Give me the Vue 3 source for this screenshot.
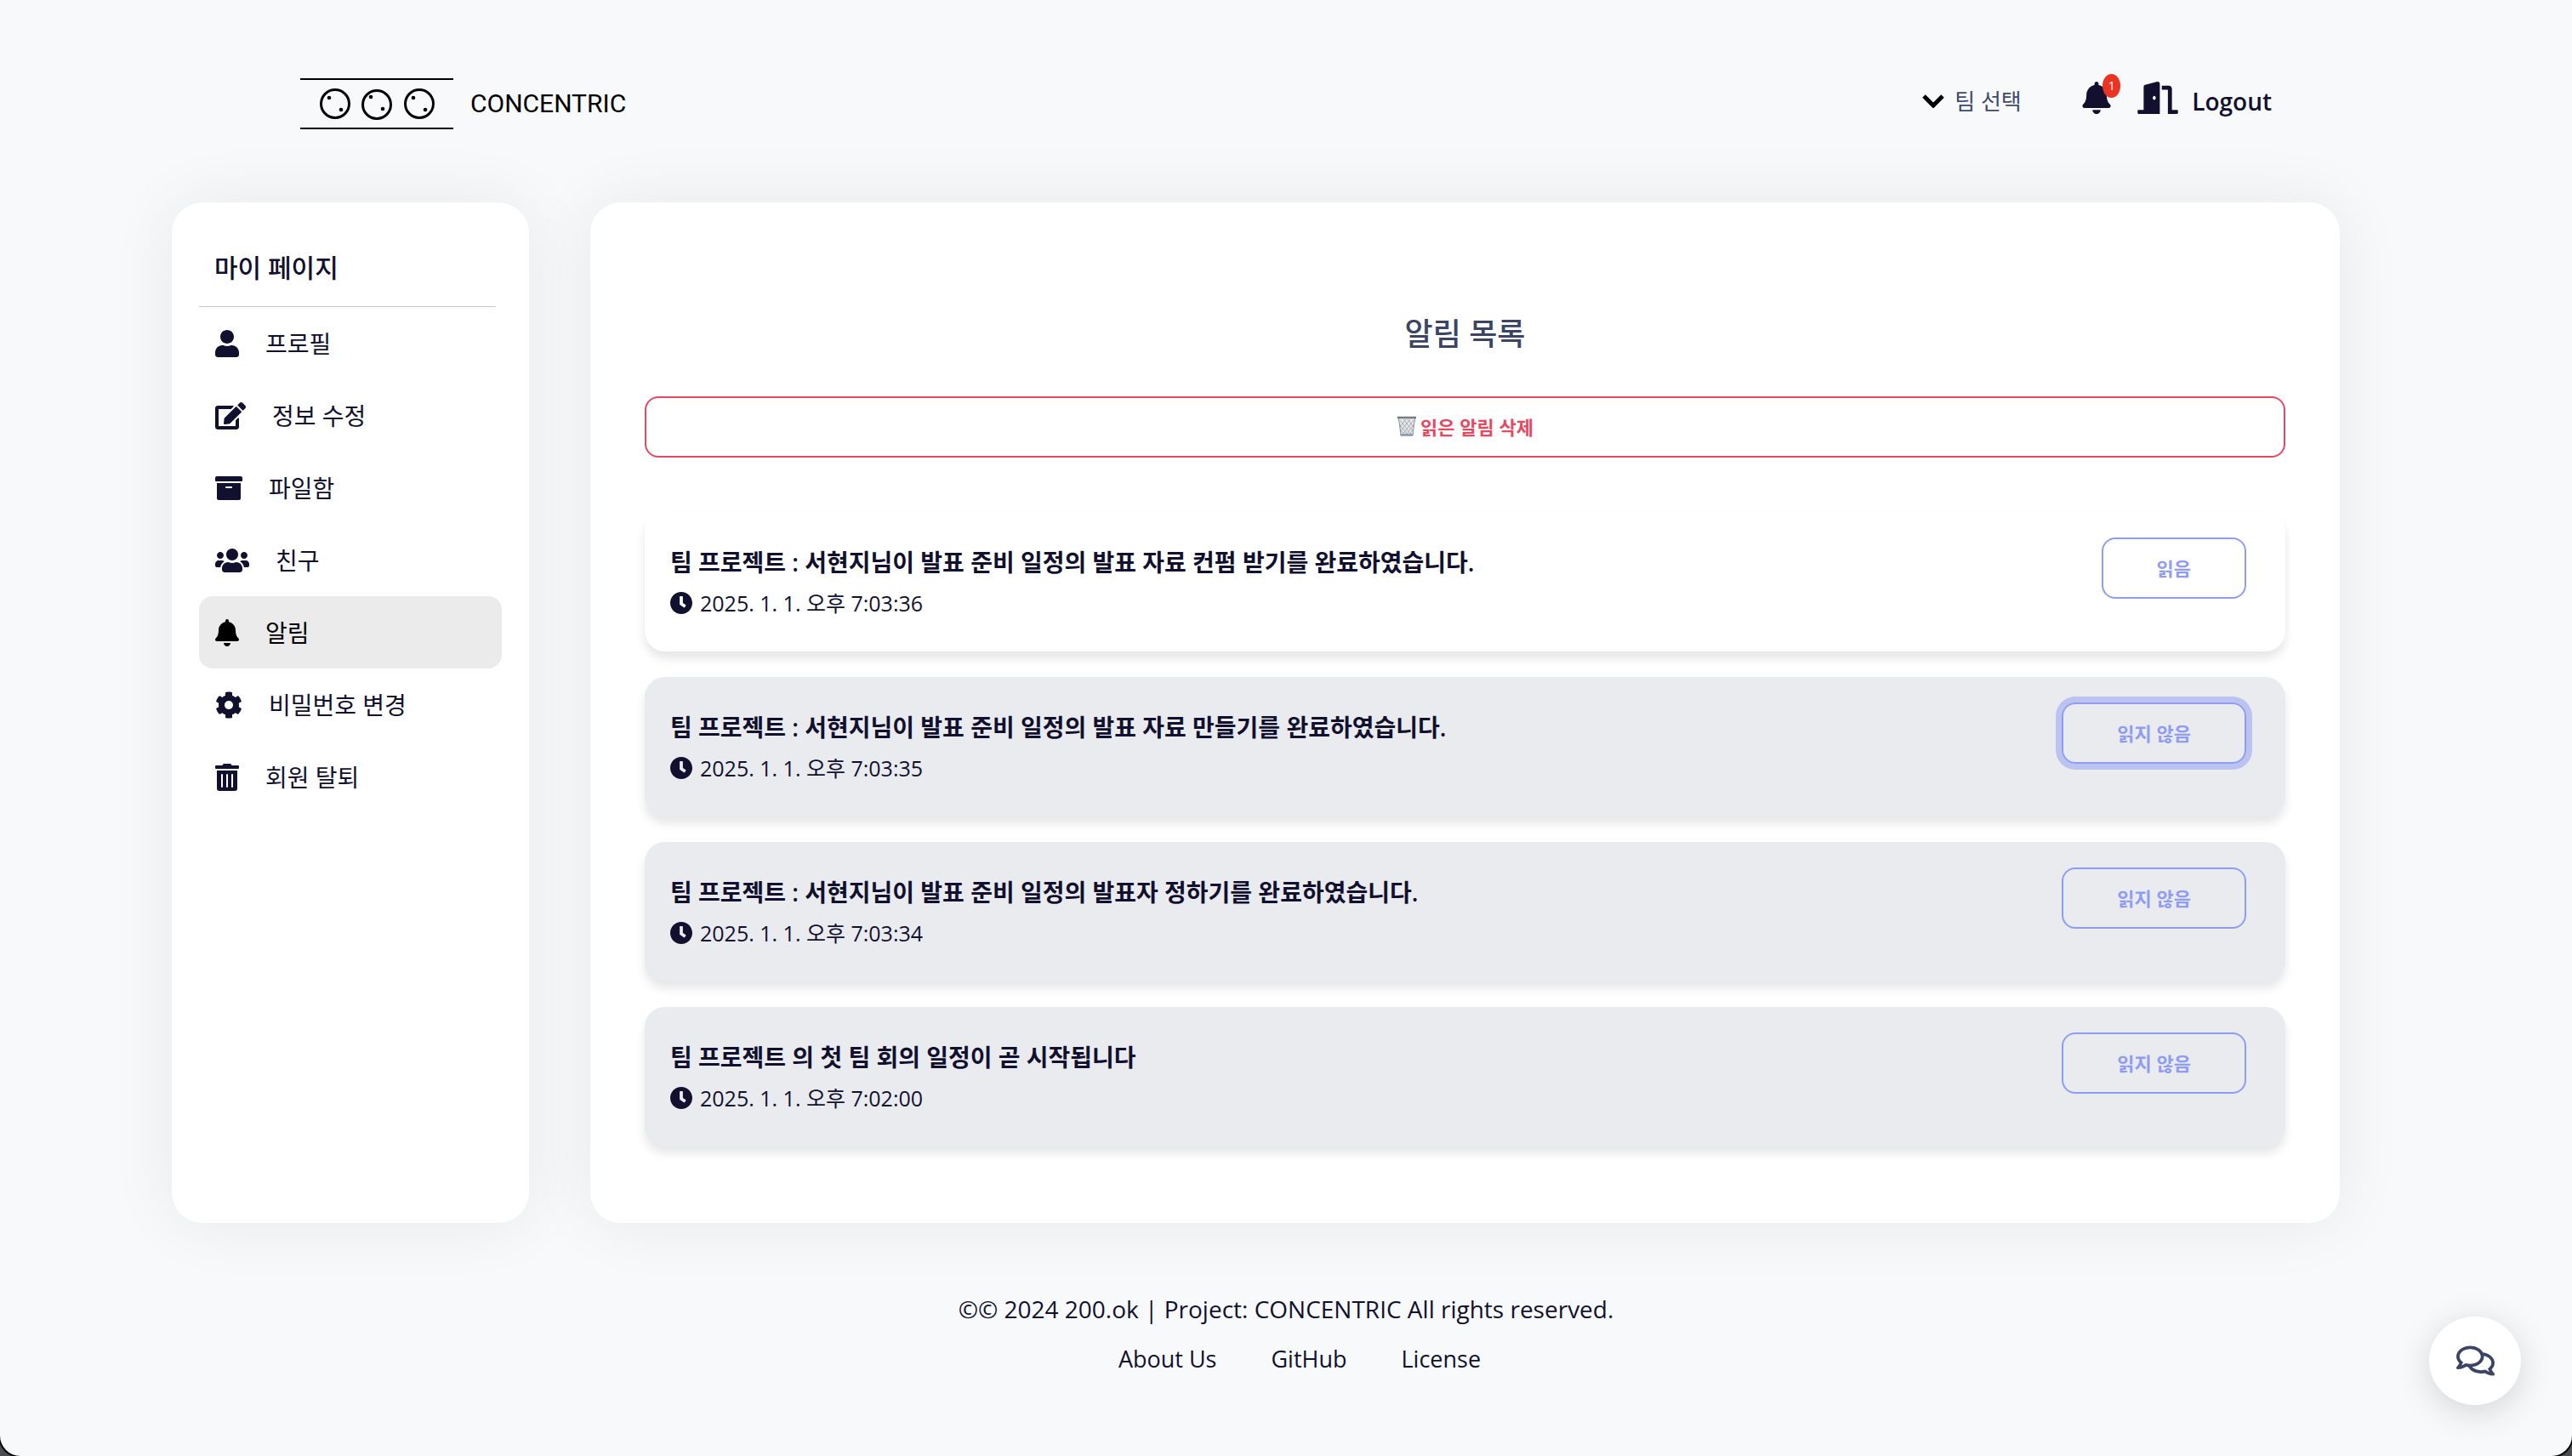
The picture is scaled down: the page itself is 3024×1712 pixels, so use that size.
<script setup>
import { ref } from 'vue'

const icons = {
  user: { w: 448, d: 'M224 256c70.7 0 128-57.3 128-128S294.7 0 224 0 96 57.3 96 128s57.3 128 128 128zm89.6 32h-16.7c-22.2 10.2-46.9 16-72.9 16s-50.6-5.8-72.9-16h-16.7C60.2 288 0 348.2 0 422.4V464c0 26.5 21.5 48 48 48h352c26.5 0 48-21.5 48-48v-41.6c0-74.2-60.2-134.4-134.4-134.4z' },
  edit: { w: 576, d: 'M402.6 83.2l90.2 90.2c3.8 3.8 3.8 10 0 13.8L274.4 405.6l-92.8 10.3c-12.4 1.4-22.9-9.1-21.5-21.5l10.3-92.8L388.8 83.2c3.8-3.8 10-3.8 13.8 0zm162-22.9l-48.8-48.8c-15.2-15.2-39.9-15.2-55.2 0l-35.4 35.4c-3.8 3.8-3.8 10 0 13.8l90.2 90.2c3.8 3.8 10 3.8 13.8 0l35.4-35.4c15.2-15.3 15.2-40 0-55.2zM384 346.2V448H64V128h229.8c3.2 0 6.2-1.3 8.5-3.5l40-40c7.6-7.6 2.2-20.5-8.5-20.5H48C21.5 64 0 85.5 0 112v352c0 26.5 21.5 48 48 48h352c26.5 0 48-21.5 48-48V306.2c0-10.7-12.9-16-20.5-8.5l-40 40c-2.2 2.3-3.5 5.3-3.5 8.5z' },
  archive: { w: 512, d: 'M32 448c0 17.7 14.3 32 32 32h384c17.7 0 32-14.3 32-32V160H32v288zm160-212c0-6.6 5.4-12 12-12h104c6.6 0 12 5.4 12 12v8c0 6.6-5.4 12-12 12H204c-6.6 0-12-5.4-12-12v-8zM480 32H32C14.3 32 0 46.3 0 64v48c0 8.800 7.200 16 16 16h480c8.800 0 16-7.200 16-16V64c0-17.700-14.300-32-32-32z' },
  users: { w: 640, d: 'M96 224c35.3 0 64-28.7 64-64s-28.7-64-64-64-64 28.7-64 64 28.7 64 64 64zm448 0c35.3 0 64-28.7 64-64s-28.7-64-64-64-64 28.7-64 64 28.7 64 64 64zm32 32h-64c-17.6 0-33.5 7.1-45.1 18.6 40.3 22.1 68.9 62 75.1 109.4h66c17.7 0 32-14.3 32-32v-32c0-35.3-28.7-64-64-64zm-256 0c61.9 0 112-50.1 112-112S381.9 32 320 32 208 82.1 208 144s50.1 112 112 112zm76.8 32h-8.3c-20.8 10-43.9 16-68.5 16s-47.6-6-68.5-16h-8.3C179.6 288 128 339.6 128 403.2V432c0 26.5 21.5 48 48 48h288c26.5 0 48-21.5 48-48v-28.8c0-63.6-51.6-115.2-115.2-115.2zm-223.7-13.4C161.5 263.1 145.6 256 128 256H64c-35.3 0-64 28.7-64 64v32c0 17.7 14.3 32 32 32h65.9c6.3-47.4 34.9-87.3 75.2-109.4z' },
  bell: { w: 448, d: 'M224 512c35.32 0 63.97-28.65 63.97-64H160.03c0 35.35 28.65 64 63.97 64zm215.39-149.71c-19.32-20.76-55.47-51.99-55.47-154.29 0-77.7-54.48-139.9-127.94-155.16V32c0-17.67-14.32-32-31.98-32s-31.98 14.33-31.98 32v20.84C118.56 68.1 64.08 130.3 64.08 208c0 102.3-36.15 133.53-55.47 154.29-6 6.45-8.66 14.16-8.61 21.71.11 16.4 12.98 32 32.1 32h383.8c19.12 0 32-15.6 32.1-32 .05-7.55-2.61-15.27-8.61-21.71z' },
  cog: { w: 512, d: 'M487.4 315.7l-42.6-24.6c4.3-23.2 4.3-47 0-70.2l42.6-24.6c4.9-2.8 7.1-8.6 5.5-14-11.1-35.6-30-67.8-54.7-94.6-3.8-4.1-10-5.1-14.8-2.3L380.8 110c-17.9-15.4-38.5-27.3-60.8-35.1V25.8c0-5.6-3.9-10.5-9.4-11.7-36.7-8.2-74.3-7.8-109.2 0-5.5 1.2-9.4 6.1-9.4 11.7V75c-22.2 7.9-42.8 19.8-60.8 35.1L88.7 85.5c-4.9-2.8-11-1.9-14.8 2.3-24.7 26.7-43.6 58.9-54.7 94.6-1.7 5.4.6 11.2 5.5 14L67.3 221c-4.3 23.2-4.3 47 0 70.2l-42.6 24.6c-4.9 2.8-7.1 8.6-5.5 14 11.1 35.6 30 67.8 54.7 94.6 3.8 4.1 10 5.1 14.8 2.3l42.6-24.6c17.9 15.4 38.5 27.3 60.8 35.1v49.2c0 5.6 3.9 10.5 9.4 11.7 36.7 8.2 74.3 7.8 109.2 0 5.5-1.2 9.4-6.1 9.4-11.7v-49.2c22.2-7.9 42.8-19.8 60.8-35.1l42.6 24.6c4.9 2.8 11 1.9 14.8-2.3 24.7-26.7 43.6-58.9 54.7-94.6 1.5-5.5-.7-11.3-5.6-14.1zM256 336c-44.1 0-80-35.9-80-80s35.9-80 80-80 80 35.9 80 80-35.9 80-80 80z' },
  trash: { w: 448, d: 'M32 464a48 48 0 0 0 48 48h288a48 48 0 0 0 48-48V128H32zm272-256a16 16 0 0 1 32 0v224a16 16 0 0 1-32 0zm-96 0a16 16 0 0 1 32 0v224a16 16 0 0 1-32 0zm-96 0a16 16 0 0 1 32 0v224a16 16 0 0 1-32 0zM432 32H312l-9.4-18.7A24 24 0 0 0 281.1 0H166.8a23.72 23.72 0 0 0-21.4 13.3L136 32H16A16 16 0 0 0 0 48v32a16 16 0 0 0 16 16h416a16 16 0 0 0 16-16V48a16 16 0 0 0-16-16z' },
}

const menu = [
  { label: '프로필', icon: icons.user },
  { label: '정보 수정', icon: icons.edit },
  { label: '파일함', icon: icons.archive },
  { label: '친구', icon: icons.users },
  { label: '알림', icon: icons.bell, active: true },
  { label: '비밀번호 변경', icon: icons.cog },
  { label: '회원 탈퇴', icon: icons.trash },
]

const notices = ref([
  { id: 1, text: '팀 프로젝트 : 서현지님이 발표 준비 일정의 발표 자료 컨펌 받기를 완료하였습니다.', time: '2025. 1. 1. 오후 7:03:36', read: true },
  { id: 2, text: '팀 프로젝트 : 서현지님이 발표 준비 일정의 발표 자료 만들기를 완료하였습니다.', time: '2025. 1. 1. 오후 7:03:35', read: false, focused: true },
  { id: 3, text: '팀 프로젝트 : 서현지님이 발표 준비 일정의 발표자 정하기를 완료하였습니다.', time: '2025. 1. 1. 오후 7:03:34', read: false },
  { id: 4, text: '팀 프로젝트 의 첫 팀 회의 일정이 곧 시작됩니다', time: '2025. 1. 1. 오후 7:02:00', read: false },
])

const team = ref('')

function removeRead() {
  notices.value = notices.value.filter((n) => !n.read)
}
</script>

<template>
  <div class="page">
    <header class="header">
      <a class="brand" href="#">
        <svg class="brand-mark" viewBox="0 0 180 62" aria-hidden="true">
          <path d="M0 2h180M0 60h180" stroke="#000" stroke-width="2" />
          <g fill="none" stroke="#000" stroke-width="3">
            <circle cx="41" cy="31" r="16.5" />
            <circle cx="90" cy="32" r="16.5" />
            <circle cx="140" cy="31" r="16.5" />
          </g>
          <g fill="#000">
            <circle cx="34" cy="24" r="2.3" /><circle cx="48" cy="38" r="2.3" />
            <circle cx="83" cy="23" r="2.3" /><circle cx="97" cy="37" r="2.3" />
            <circle cx="133" cy="24" r="2.3" /><circle cx="147" cy="38" r="2.3" />
          </g>
        </svg>
        <span class="brand-name">CONCENTRIC</span>
      </a>
      <nav class="tools">
        <label class="team">
          <svg class="chevron" viewBox="0 0 26 16" aria-hidden="true">
            <path d="M2 2l11 11L24 2" fill="none" stroke="#000" stroke-width="5" />
          </svg>
          <select v-model="team" class="team-select" aria-label="팀 선택">
            <option value="">팀 선택</option>
          </select>
        </label>
        <div class="tool-icons">
          <button class="bell" type="button" aria-label="알림">
            <svg class="bell-icon" viewBox="0 0 448 512" aria-hidden="true"><path :d="icons.bell.d" /></svg>
            <span class="badge">1</span>
          </button>
          <svg class="door-icon" viewBox="0 0 640 512" aria-hidden="true">
            <path d="M624 448h-80V113.45C544 86.19 522.47 64 496 64H384v64h96v384h144c8.84 0 16-7.16 16-16v-32c0-8.84-7.16-16-16-16zM312.24 1.01l-192 49.74C105.99 54.44 96 67.7 96 82.92V448H16c-8.84 0-16 7.16-16 16v32c0 8.84 7.16 16 16 16h336V33.18c0-21.58-19.56-37.41-39.76-32.17zM264 288c-13.25 0-24-14.33-24-32s10.75-32 24-32 24 14.33 24 32-10.75 32-24 32z" />
          </svg>
        </div>
        <a class="logout" href="#">Logout</a>
      </nav>
    </header>

    <div class="columns">
      <aside class="panel sidebar">
        <h2 class="side-title">마이 페이지</h2>
        <hr class="side-rule" />
        <nav>
          <ul class="menu">
            <li v-for="m in menu" :key="m.label">
              <a class="menu-item" :class="{ active: m.active }" href="#">
                <svg class="menu-icon" :viewBox="`0 0 ${m.icon.w} 512`" aria-hidden="true"><path :d="m.icon.d" /></svg>
                <span>{{ m.label }}</span>
              </a>
            </li>
          </ul>
        </nav>
      </aside>

      <main class="panel content">
        <h1 class="title">알림 목록</h1>
        <button class="btn btn-delete" type="button" @click="removeRead">
          <svg class="bin" viewBox="0 0 24 24" aria-hidden="true">
            <path d="M2 3h20l-2.5 20h-15z" fill="#e6e8ea" />
            <path d="M4 5l13 17M8 4l11 14M13 4l7 9M3.5 10l9 12M4.5 16l4 6M20 5L7 22M16 4L5 18M11 4l-7 9M20.5 10l-9 12M19.5 16l-4 6" stroke="#a9adb1" stroke-width="1" fill="none" />
            <path d="M2.5 3l2.5 19M21.5 3L19 22" stroke="#8b9096" stroke-width="1" />
            <path d="M1 2h22" stroke="#747b83" stroke-width="2.5" />
            <path d="M4.5 22.5h15" stroke="#8796a8" stroke-width="2.5" />
          </svg>
          <span>읽은 알림 삭제</span>
        </button>
        <ul class="notices">
          <li v-for="n in notices" :key="n.id" class="notice" :class="{ unread: !n.read }">
            <div class="notice-body">
              <p class="notice-text">{{ n.text }}</p>
              <p class="notice-time">
                <svg class="clock" viewBox="8 8 496 496" aria-hidden="true">
                  <path d="M256 8C119 8 8 119 8 256s111 248 248 248 248-111 248-248S393 8 256 8zm57.1 350.1L224.9 294c-3.1-2.3-4.9-5.9-4.9-9.7V116c0-6.6 5.4-12 12-12h48c6.6 0 12 5.4 12 12v137.7l63.5 46.2c5.4 3.9 6.5 11.4 2.6 16.8l-28.2 38.8c-3.9 5.3-11.4 6.5-16.8 2.6z" />
                </svg>
                <time>{{ n.time }}</time>
              </p>
            </div>
            <button class="btn btn-read" :class="{ focused: n.focused }" type="button" @click="n.read = !n.read">
              {{ n.read ? '읽음' : '읽지 않음' }}
            </button>
          </li>
        </ul>
      </main>
    </div>

    <footer class="footer">
      <p class="copyright">©© 2024 200.ok | Project: CONCENTRIC All rights reserved.</p>
      <ul class="links">
        <li><a href="#">About Us</a></li>
        <li><a href="#">GitHub</a></li>
        <li><a href="#">License</a></li>
      </ul>
    </footer>

    <button class="chat" type="button" aria-label="채팅">
      <svg class="chat-icon" viewBox="0 0 576 512" aria-hidden="true">
        <path d="M532 386.2c27.5-27.1 44-61.1 44-98.2 0-80-76.5-146.1-176.2-157.9C368.3 72.5 294.3 32 208 32 93.1 32 0 103.6 0 192c0 37 16.5 71 44 98.2-15.3 30.7-37.3 54.5-37.7 54.9-6.3 6.7-8.1 16.5-4.4 25 3.6 8.5 12 14 21.2 14 53.5 0 96.7-20.2 125.2-38.8 9.2 2.1 18.7 3.7 28.4 4.9C208.1 407.6 281.8 448 368 448c20.8 0 40.8-2.4 59.8-6.8C456.3 459.7 499.4 480 553 480c9.2 0 17.5-5.5 21.2-14 3.6-8.5 1.9-18.3-4.4-25-.4-.3-22.5-24.1-37.8-54.8zm-392.8-92.3L122.1 305c-14.1 9.1-28.5 16.3-43.1 21.4 2.7-4.7 5.4-9.7 8-14.8l15.5-31.1L77.7 256C64.2 242.6 48 220.7 48 192c0-60.7 73.3-112 160-112s160 51.3 160 112-73.3 112-160 112c-16.5 0-33-1.9-49-5.6l-19.8-4.5zM498.3 352l-24.7 24.4 15.5 31.1c2.6 5.1 5.3 10.1 8 14.8-14.6-5.1-29-12.3-43.1-21.4l-17.1-11.1-19.9 4.6c-16 3.7-32.5 5.6-49 5.6-54 0-102.2-20.1-131.3-49.7C338 339.5 416 272.9 416 192c0-3.4-.4-6.7-.7-10C479.7 196.5 528 238.8 528 288c0 28.7-16.2 50.6-29.7 64z" />
      </svg>
    </button>
  </div>
</template>

<style>
html {
  background: #4a4c50;
}
</style>

<style scoped>
.page {
  min-height: 100vh;
  box-sizing: border-box;
  background: #f8f9fb;
  border-radius: 0 0 24px 24px;
  box-shadow: 0 0 0 2px #000;
  color: #11112f;
  font-family: "Open Sans", "Noto Sans CJK KR", sans-serif;
  font-size: 28px;
  line-height: 40px;
}
h1, h2, p, ul {
  margin: 0;
  padding: 0;
}
ul {
  list-style: none;
}
a {
  color: inherit;
  text-decoration: none;
}
svg {
  display: block;
  flex: none;
}
button, select {
  font-family: inherit;
  background: none;
  border: 0;
  padding: 0;
  cursor: pointer;
}
.header {
  display: flex;
  align-items: center;
  justify-content: space-between;
  height: 238px;
  padding: 0 353px;
  box-sizing: border-box;
}
.brand {
  display: flex;
  align-items: center;
  gap: 20px;
  padding-top: 6px;
  color: #000;
}
.brand-mark {
  width: 180px;
  height: 62px;
}
.brand-name {
  font-family: "Liberation Sans Narrow", "Roboto", sans-serif;
  font-size: 30px;
}
.tools {
  display: flex;
  align-items: center;
}
.team {
  display: flex;
  align-items: center;
  gap: 12px;
  margin-right: 71px;
}
.chevron {
  width: 26px;
  height: 16px;
}
.team-select {
  appearance: none;
  color: #3f4b6c;
  font-size: 26px;
  line-height: 40px;
}
.tool-icons {
  display: flex;
  align-items: center;
  gap: 31px;
  padding-bottom: 8px;
}
.bell {
  position: relative;
}
.bell-icon {
  width: 34px;
  height: 38px;
  fill: #11112f;
}
.badge {
  position: absolute;
  top: -9px;
  right: -11px;
  width: 21px;
  height: 28px;
  border-radius: 50%;
  background: #ea3323;
  color: #fff;
  font-size: 14px;
  line-height: 27px;
  text-align: center;
}
.logout {
  margin-left: 16px;
  font-weight: 600;
}
.door-icon {
  width: 48px;
  height: 38px;
  fill: #11112f;
}
.columns {
  display: flex;
  gap: 72px;
  padding: 0 273px 0 202px;
}
.panel {
  background: #fff;
  border-radius: 36px;
  box-shadow: 0 0 80px rgba(0, 0, 0, 0.07);
  box-sizing: border-box;
}
.sidebar {
  flex: none;
  width: 420px;
  padding: 32px;
}
.side-title {
  padding: 24px 18px;
  font-size: 30px;
  font-weight: 500;
  line-height: 42px;
}
.side-rule {
  height: 1px;
  margin: 0 7px 0 0;
  border: 0;
  background: #c8c8c8;
}
.menu-item {
  display: flex;
  align-items: center;
  gap: 31px;
  height: 85px;
  padding: 0 19px;
  border-radius: 16px;
}
.menu-item.active {
  background: #ebebeb;
  color: #000;
}
.menu-icon {
  height: 32px;
  fill: currentColor;
}
.content {
  flex: 1;
  min-width: 0;
  padding: 130px 64px 90px;
}
.title {
  color: #3a4565;
  font-size: 36px;
  font-weight: 500;
  line-height: 50px;
  text-align: center;
}
.btn {
  display: flex;
  align-items: center;
  justify-content: center;
  height: 72px;
  box-sizing: border-box;
  padding-bottom: 2px;
  border: 2px solid;
  border-radius: 16px;
  font-size: 22px;
  font-weight: 700;
}
.btn-delete {
  width: 100%;
  gap: 4px;
  margin: 48px 0 64px;
  color: #e64862;
}
.bin {
  width: 24px;
  height: 24px;
}
.notices {
  display: grid;
  gap: 30px;
}
.notice {
  display: flex;
  justify-content: space-between;
  align-items: flex-start;
  min-height: 164px;
  padding: 30px 46px 30px 30px;
  box-sizing: border-box;
  border-radius: 24px;
  box-shadow: 0 8px 12px rgba(0, 0, 0, 0.1);
}
.notice.unread {
  background: #eaebef;
}
.notice-body {
  padding-top: 9px;
}
.notice-text {
  font-weight: 600;
  line-height: 40px;
}
.notice-time {
  display: flex;
  align-items: center;
  gap: 9px;
  padding-top: 8px;
  font-size: 25px;
  line-height: 40px;
}
.clock {
  width: 26px;
  height: 26px;
  fill: #11112f;
}
.btn-read {
  padding: 0 63px 2px;
  color: #8f9cf3;
}
.btn-read.focused {
  box-shadow: 0 0 0 7px #bbc3f1;
}
.footer {
  padding: 81px 0;
  text-align: center;
}
.links {
  display: flex;
  justify-content: center;
  gap: 64px;
  margin-top: 19px;
  padding-left: 32px;
  font-size: 27px;
}
.chat {
  position: fixed;
  right: 60px;
  bottom: 60px;
  display: flex;
  align-items: center;
  justify-content: center;
  width: 108px;
  height: 104px;
  border-radius: 50%;
  background: #fff;
  box-shadow: 0 8px 40px rgba(0, 0, 0, 0.15);
}
.chat-icon {
  width: 45px;
  height: 40px;
  fill: #3a4565;
}
</style>
